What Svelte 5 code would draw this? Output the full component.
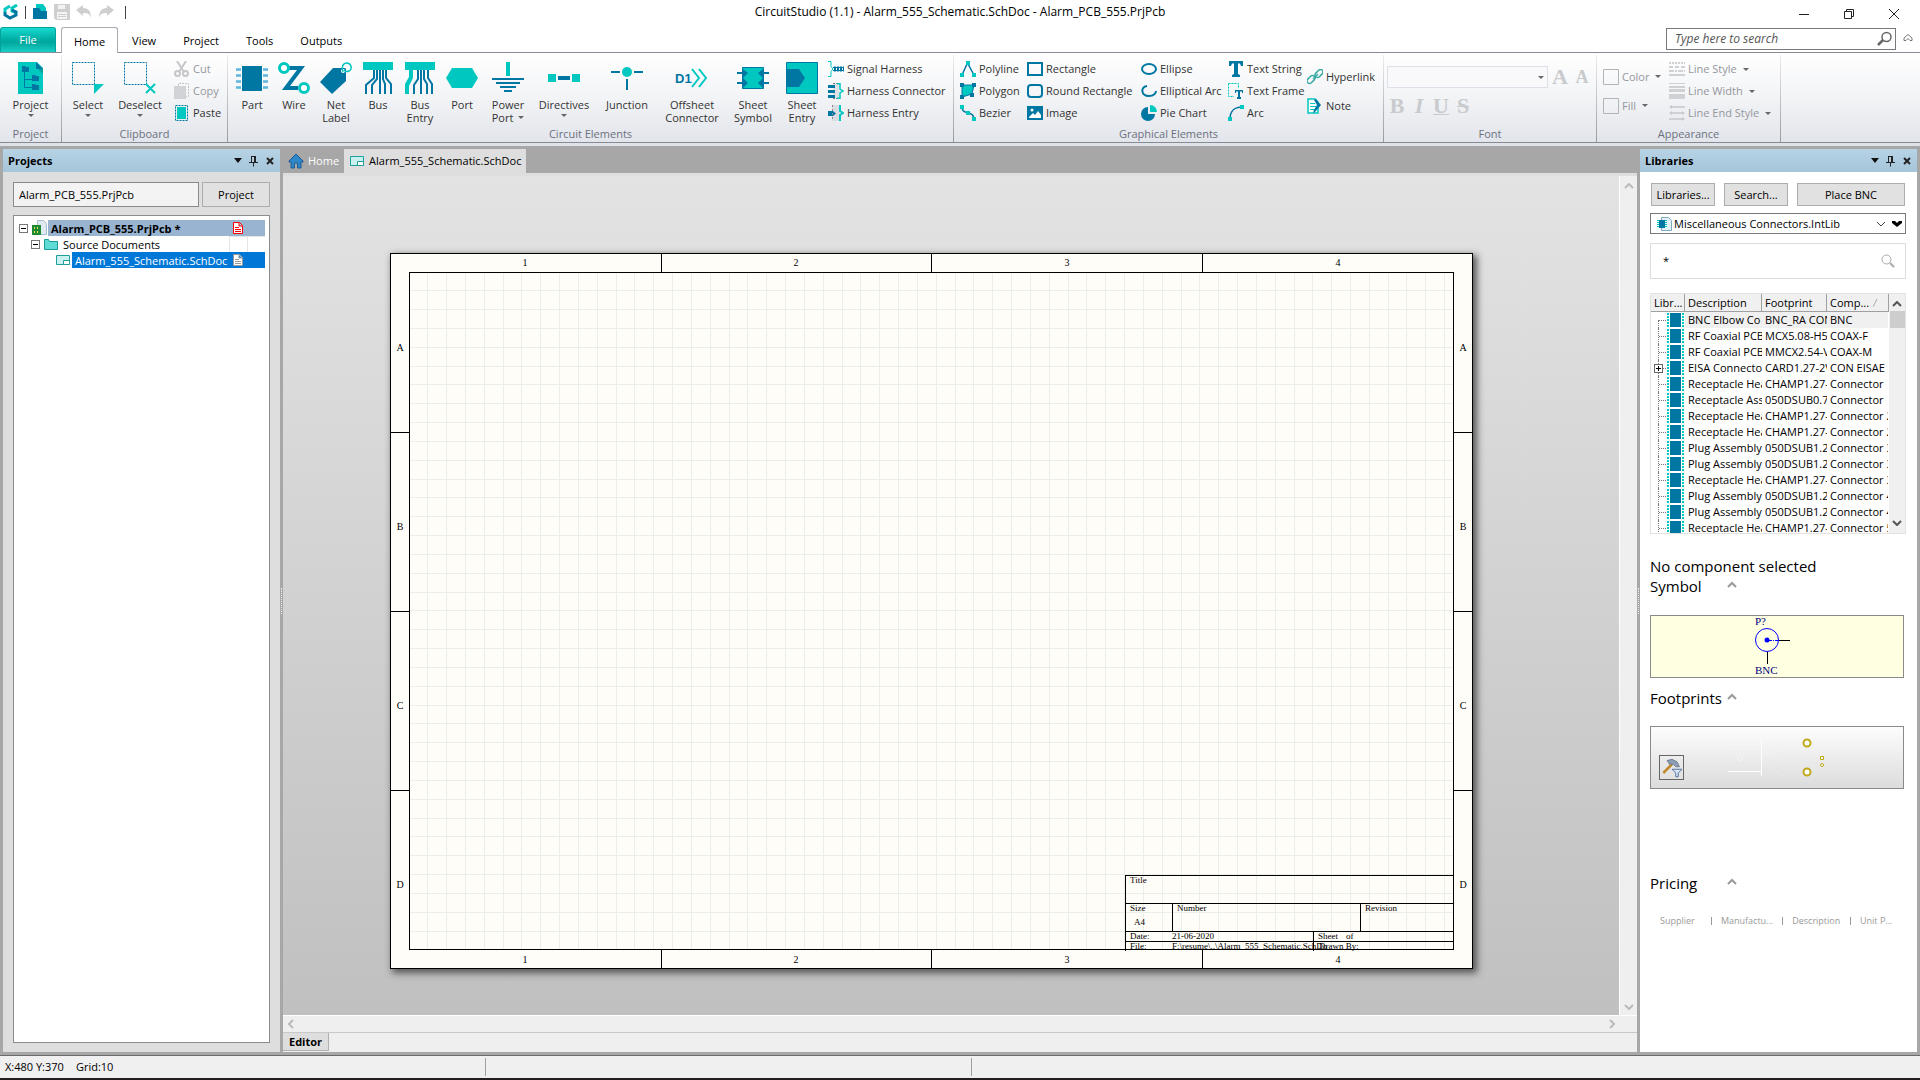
<script lang="ts">
  type BigButton = { label: string[]; icon: string; width: number; arrow?: 'below' | 'inline' };
  type SmallButton = { label: string; icon: string; disabled?: boolean; arrow?: boolean };

  const D = '#0076a3';
  const T = '#00c8c0';

  // 32x32 glyphs for the large ribbon buttons
  const big: Record<string, string> = {
    project: `<path fill="${T}" d="M3 0h19l6 6v26H3z"/><path fill="#00a39f" d="M22 6l6 6V6z"/><path fill="${D}" d="M21 0l7 7h-7zM7 4h3l1 1h3v5H7zM17 13h3l1 1h3v5h-7zM17 22h3l1 1h3v5h-7z"/><path fill="none" stroke="${D}" d="M9.500 10v15.500h7.500M9.500 17.500h7.500"/>`,
    select: `<path fill="none" stroke="${D}" stroke-dasharray="2 1" d="M.5.5h22v22H.5z"/><path fill="${T}" d="M22 22h10L22 32z"/>`,
    deselect: `<path fill="none" stroke="${D}" stroke-dasharray="2 1" d="M.5.5h22v22H.5z"/><path fill="none" stroke="${T}" stroke-width="2" d="M22 22l9 9M31 22l-9 9"/>`,
    part: `<path fill="${D}" d="M6 4h20v25H6z"/><path stroke="#5bb5dc" stroke-width="2.500" d="M0 7.500h5M0 13.500h5M0 19.500h5M0 25.500h5M27 7.500h5M27 13.500h5M27 19.500h5M27 25.500h5"/>`,
    wire: `<path fill="none" stroke="${D}" stroke-width="4" d="M11 6h12L8 26h12"/><g fill="#fff" stroke="${T}" stroke-width="3"><circle cx="6" cy="6" r="4.500"/><circle cx="26" cy="26" r="4.500"/></g>`,
    netlabel: `<path fill="${D}" d="M0 20L13 6h12l1 1v12L12 32z"/><circle cx="23" cy="9" r="2" fill="#fff"/><path fill="none" stroke="${T}" stroke-width="1.500" d="M23 10c-2-5 0-9 4-9s6 6 2 8c-2 1-4 0-5-1"/>`,
    bus: `<path fill="${T}" d="M1 0h30v8H1z"/><path fill="none" stroke="${D}" stroke-width="2" d="M12 8v8l-8 7v9M15 8v9l-5 6v9M18 8v24M21 8v9l2 5v10M24 8v8l5 6v10"/>`,
    busentry: `<path fill="${T}" d="M1 0h30v8H9v8l-4 8v8H1V22l4-7V8H1z"/><path fill="none" stroke="${D}" stroke-width="2" d="M14 8v9l-4 6v9M17 8v24M20 8v9l3 5v10M24 8v8l4 6v10"/>`,
    port: `<path fill="${T}" d="M6 6h20l6 10-6 10H6L0 16z"/>`,
    power: `<path fill="${T}" d="M14 0h4v14h-4z"/><path stroke="${D}" stroke-width="2" d="M0 17h32M4 21h24M8 25h16M12 29h8"/>`,
    directives: `<path fill="${T}" d="M0 12h8v8H0zM24 12h8v8h-8z"/><path fill="${D}" d="M10 14h12v4H10z"/>`,
    junction: `<circle cx="16" cy="10" r="5" fill="${T}"/><path stroke="${D}" stroke-width="2" d="M0 10h9M23 10h9M16 17v11"/>`,
    offsheet: `<text x="-1" y="21" font-family="Liberation Sans, sans-serif" font-weight="700" font-size="13" fill="${D}">D1</text><path fill="none" stroke="${T}" stroke-width="2" d="M16 7l7 9-7 9M23 7l7 9-7 9"/>`,
    sheetsymbol: `<path fill="${T}" stroke="${D}" d="M5.500 5.500h21v21h-21z"/><path fill="${D}" d="M6 7l5 4-5 5zM6 16l5 5-5 5zM26 7l-5 4 5 5zM26 16l-5 5 5 5z"/><path stroke="${D}" stroke-width="2" d="M0 11h8M0 21h8M24 11h8M24 21h8"/>`,
    sheetentry: `<path fill="${T}" stroke="${D}" d="M.5.5h31v31H.5z"/><path fill="${D}" d="M1 7h12l6 9-6 9H1z"/>`,
  };

  // 16x16 glyphs
  const small: Record<string, string> = {
    cut: `<g fill="none" stroke="#c6c6c8" stroke-width="2"><path d="M3 0l7 11M12 0L5 11"/><circle cx="3.500" cy="12.500" r="2.500"/><circle cx="11.500" cy="12.500" r="2.500"/></g>`,
    copy: `<path fill="#d2d3d6" d="M0 3h12v13H0z"/><path fill="none" stroke="#c6c6c8" stroke-dasharray="2 1" d="M4.500 3V.5h10v13H12"/>`,
    paste: `<path fill="none" stroke="${D}" stroke-dasharray="2 1" d="M1.500.5h12v15h-12z"/><path fill="${T}" d="M3 2h9v12H3z"/>`,
    sharness: `<path fill="none" stroke="${T}" d="M0 .5h3v5l2 2.500-2 2.500v5H0"/><path stroke="${D}" stroke-width="5" stroke-dasharray="2 1" d="M6 8h10"/><path stroke="${D}" d="M5 6.500h11M5 9.500h11"/>`,
    hconnector: `<path fill="#dfe1e6" d="M5 1h6v14H5z"/><path stroke="${D}" stroke-width="3" d="M0 3.500h7M0 8.500h7M0 13.500h7"/><path fill="none" stroke="${T}" stroke-width="1.500" d="M9 .7h3v5.500L15 8l-3 2v5.300H9"/><path stroke="#777" stroke-dasharray="2 1" d="M5 .5h4M5 15.500h4"/>`,
    hentry: `<path fill="#d9dce2" d="M4 0h8v16H4z"/><path fill="${D}" d="M0 6h5l3 2.500L5 11H0z"/><path fill="none" stroke="${T}" stroke-width="2" d="M12 0v6l3 2-3 2v6"/><path stroke="#888" stroke-dasharray="2 2" d="M4.500 0v16"/>`,
    polyline: `<path fill="none" stroke="${D}" stroke-width="1.500" d="M2 14L7 3h1l6 11"/><path fill="${T}" d="M6 0h4v4H6zM0 12h4v4H0zM12 12h4v4h-4z"/>`,
    polygon: `<path fill="${T}" stroke="${D}" d="M2 2h12L12 11 2 14z"/><path fill="${D}" d="M0 0h4v4H0zM12 0h4v4h-4zM10 10h4v4h-4zM0 12h4v4H0z"/>`,
    bezier: `<path fill="none" stroke="${D}" stroke-width="1.500" d="M2 2c0 4 2 5 5 5.500S14 9 14 14"/><path fill="${T}" d="M0 0h4v4H0zM6 6h4v4H6zM12 12h4v4h-4z"/>`,
    rect: `<path fill="none" stroke="${D}" stroke-width="2" d="M1 2h14v12H1z"/>`,
    roundrect: `<rect x="1" y="2" width="14" height="12" rx="3" fill="none" stroke="${D}" stroke-width="2"/>`,
    image: `<path fill="${D}" d="M0 1h16v14H0z"/><path fill="#fff" d="M2 12l4-4 2 2 3-4 3 4v3H2z"/><circle cx="5" cy="5" r="1.500" fill="#fff"/>`,
    ellipse: `<ellipse cx="8" cy="8" rx="7" ry="5" fill="none" stroke="${D}" stroke-width="2"/>`,
    earc: `<path fill="none" stroke="${D}" stroke-width="2" d="M6 3C-1 4 0 13 8 13c5 0 7-3 7-5"/>`,
    pie: `<path fill="${D}" d="M7 2v7h7a7 7 0 1 1-7-7z"/><path fill="${T}" d="M9 0a7 7 0 0 1 7 7H9z"/>`,
    text: `<path fill="${D}" d="M1 0h14v5h-2L12 2.500h-2V13l2 1v2H4v-2l2-1V2.500H4L3 5H1z"/>`,
    frame: `<path fill="none" stroke="${T}" stroke-dasharray="2 1" d="M.5.5h10v5M.5.5v13H6"/><path fill="${D}" d="M7 7h8v3h-1V8.500h-2V14h1v2H9v-2h1V8.500H8V10H7z"/>`,
    arc: `<path fill="none" stroke="${D}" stroke-width="1.500" d="M2 14C2 7 6 2 14 2"/><path fill="${T}" d="M12 0h4v4h-4zM0 12h4v4H0z"/>`,
    link: `<g fill="none" stroke="#3aa9a4" stroke-width="1.500"><rect x="-.5" y="8" width="9" height="5" rx="2.500" transform="rotate(-45 4 10.500)"/><rect x="7.500" y="2" width="9" height="5" rx="2.500" transform="rotate(-45 12 4.500)"/><path d="M6 10l5-5"/></g>`,
    note: `<path fill="#fff" stroke="${T}" stroke-width="1.500" d="M1 1h7l3 3v11H1z"/><path stroke="${T}" d="M3 5.500h5M3 8.500h6M3 11.500h5"/><path fill="${D}" d="M7 2l2-1 5 6-6 7-2 1 1-3 3-5z"/>`,
    swatch: `<path fill="none" stroke="#b2b4b8" d="M.5.5h15v15H.5z"/>`,
    lstyle: `<g stroke="#d0d1d5" stroke-width="2"><path stroke-dasharray="2 1" d="M0 2h16"/><path stroke-dasharray="4 2" d="M0 6h16"/><path stroke-dasharray="5 1 2 1" d="M0 10h16"/><path d="M0 14h16"/></g>`,
    lwidth: `<path fill="#d0d1d5" d="M0 0h16v1H0zM0 3h16v2H0zM0 6h16v3H0zM0 11h16v5H0z"/>`,
    lend: `<path stroke="#d0d1d5" stroke-width="2" d="M2 2h14M2 8h12M0 14h14"/><path fill="#c8c9cd" d="M3 0v4L0 2zM3 6v4L0 8zM13 6v4l3-2zM13 12v4l3-2z"/>`,
    pcb: `<path fill="#dfe9f2" stroke="#a9bfd0" d="M6.500.5h6l3 3v11h-9z"/><path fill="#1c8a35" d="M1 5h9v10H1z"/><path fill="#f4e04a" d="M3 7h1v2H3zM6 7h1v2H6zM3 11h1v2H3zM6 11h1v2H6z"/>`,
    folder: `<path fill="#5fdbd6" stroke="#169c9b" d="M1.500 3.500h4l1 2h8v8h-13z"/>`,
    sch: `<path fill="#c9f1ef" stroke="#1f9f9c" d="M1.500 3.500h13v9h-13z"/><path fill="#fff" stroke="#1f9f9c" d="M8.500 8.500h6v4h-6z"/>`,
    lib: `<path fill="#e3f1f6" stroke="#7fa9bb" d="M5.500 1.500h7l3 3v10h-10z"/><path fill="${D}" d="M3 4h6v8H3z"/><path stroke="${T}" stroke-width="2" stroke-dasharray="1 1" d="M2 4v8M10 4v8"/>`,
    chip: `<path fill="${D}" d="M3 1h11v14H3z"/><path stroke="${T}" stroke-width="2" stroke-dasharray="2 1" d="M1 1v14M16 1v14"/>`,
    home: `<path fill="#2f86c9" stroke="#1b5e95" d="M8 1l7 7v1h-2v6H9.500v-5h-3v5H3V9H1V8z"/>`,
    search: `<circle cx="9.500" cy="6" r="4.500" fill="none" stroke="#666" stroke-width="1.500"/><path stroke="#666" stroke-width="2.500" d="M6 9l-5 5"/>`,
    find: `<circle cx="6.500" cy="6.500" r="4.500" fill="none" stroke="#aaa"/><path stroke="#aaa" stroke-width="2" d="M10 10l4 4"/>`,
    pin: `<path fill="none" stroke="#222" d="M5.500 3v6M5 3.500h5M3 9.500h9M7.500 9.500v4"/><path fill="#222" d="M8 3h2v6H8z"/>`,
    menu: `<path fill="#111" d="M4 5h8l-4 5z"/>`,
    close: `<path stroke="#222" stroke-width="2" d="M5 5l6 6M11 5l-6 6"/>`,
    collapse: `<path fill="none" stroke="#999" stroke-width="2" d="M4 9l4-4 4 4"/>`,
    hammer: `<path stroke="#c08a2c" stroke-width="2" d="M1 12l7-7"/><path fill="#8d9db4" stroke="#4b5f7d" stroke-width=".5" d="M4 2l4-1 4 2 2 4-3 0-2-2-3 0z"/><path fill="#d6e4f4" stroke="#45679a" stroke-width=".7" d="M8 9h8l-3 3v3h-2v-3z"/>`,
  };

  const circuit: BigButton[] = [
    { label: ['Part'], icon: 'part', width: 42 },
    { label: ['Wire'], icon: 'wire', width: 42 },
    { label: ['Net', 'Label'], icon: 'netlabel', width: 42 },
    { label: ['Bus'], icon: 'bus', width: 42 },
    { label: ['Bus', 'Entry'], icon: 'busentry', width: 42 },
    { label: ['Port'], icon: 'port', width: 42 },
    { label: ['Power', 'Port'], icon: 'power', width: 50, arrow: 'inline' },
    { label: ['Directives'], icon: 'directives', width: 62, arrow: 'below' },
    { label: ['Junction'], icon: 'junction', width: 64 },
    { label: ['Offsheet', 'Connector'], icon: 'offsheet', width: 66 },
    { label: ['Sheet', 'Symbol'], icon: 'sheetsymbol', width: 56 },
    { label: ['Sheet', 'Entry'], icon: 'sheetentry', width: 42 },
  ];

  const clipboard: SmallButton[] = [
    { label: 'Cut', icon: 'cut', disabled: true },
    { label: 'Copy', icon: 'copy', disabled: true },
    { label: 'Paste', icon: 'paste' },
  ];
  const harness: SmallButton[] = [
    { label: 'Signal Harness', icon: 'sharness' },
    { label: 'Harness Connector', icon: 'hconnector' },
    { label: 'Harness Entry', icon: 'hentry' },
  ];
  const graphical: { width: number; items: SmallButton[] }[] = [
    { width: 67, items: [{ label: 'Polyline', icon: 'polyline' }, { label: 'Polygon', icon: 'polygon' }, { label: 'Bezier', icon: 'bezier' }] },
    { width: 114, items: [{ label: 'Rectangle', icon: 'rect' }, { label: 'Round Rectangle', icon: 'roundrect' }, { label: 'Image', icon: 'image' }] },
    { width: 87, items: [{ label: 'Ellipse', icon: 'ellipse' }, { label: 'Elliptical Arc', icon: 'earc' }, { label: 'Pie Chart', icon: 'pie' }] },
    { width: 79, items: [{ label: 'Text String', icon: 'text' }, { label: 'Text Frame', icon: 'frame' }, { label: 'Arc', icon: 'arc' }] },
    { width: 74, items: [{ label: 'Hyperlink', icon: 'link' }, { label: 'Note', icon: 'note' }] },
  ];
  const colors: SmallButton[] = [
    { label: 'Color', icon: 'swatch', disabled: true, arrow: true },
    { label: 'Fill', icon: 'swatch', disabled: true, arrow: true },
  ];
  const lines: SmallButton[] = [
    { label: 'Line Style', icon: 'lstyle', disabled: true, arrow: true },
    { label: 'Line Width', icon: 'lwidth', disabled: true, arrow: true },
    { label: 'Line End Style', icon: 'lend', disabled: true, arrow: true },
  ];

  const parts = [
    ['BNC Elbow Co', 'BNC_RA CON', 'BNC'],
    ['RF Coaxial PCB', 'MCX5.08-H5', 'COAX-F'],
    ['RF Coaxial PCB', 'MMCX2.54-V', 'COAX-M'],
    ['EISA Connecto', 'CARD1.27-2V', 'CON EISAE'],
    ['Receptacle Hea', 'CHAMP1.27-', 'Connector'],
    ['Receptacle Ass', '050DSUB0.76', 'Connector'],
    ['Receptacle Hea', 'CHAMP1.27-', 'Connector 2'],
    ['Receptacle Hea', 'CHAMP1.27-', 'Connector 2'],
    ['Plug Assembly,', '050DSUB1.27', 'Connector 3'],
    ['Plug Assembly,', '050DSUB1.27', 'Connector 3'],
    ['Receptacle Hea', 'CHAMP1.27-', 'Connector 3'],
    ['Plug Assembly,', '050DSUB1.27', 'Connector 4'],
    ['Plug Assembly,', '050DSUB1.27', 'Connector 4'],
    ['Receptacle Hea', 'CHAMP1.27-', 'Connector 5'],
  ];

  const gridX = Array.from({ length: 55 }, (_, i) => Math.floor(19 + (i + 1) * 18.83) + 0.5);
  const gridY = Array.from({ length: 35 }, (_, i) => Math.floor(19 + (i + 1) * 18.83) + 0.5);
  const zones = ['A', 'B', 'C', 'D'];

  let activeTab = 'Home';
  let activeProject = 'Alarm_PCB_555.PrjPcb';
  let filter = '*';
  let query = '';
</script>

<svelte:head><title>CircuitStudio (1.1)</title></svelte:head>

<div class="app">
  <header class="titlebar">
    <div class="quick">
      <svg width="16" height="16" viewBox="0 0 16 16"><path fill="none" stroke={T} stroke-width="3" d="M7 2L2 5v3M14 1L9 4v3l5 2" /><path fill="none" stroke={D} stroke-width="3" d="M2 8v3l5 3 6-3V8L9 6" /></svg>
      <i class="bar"></i>
      <button aria-label="Open"><svg width="16" height="16" viewBox="0 0 16 16"><path fill={T} d="M4 0h7l3 4v5H4z" /><path fill={D} d="M1 4h6l2 3h6v8H1z" /></svg></button>
      <button aria-label="Save" disabled><svg width="16" height="16" viewBox="0 0 16 16"><path fill="#cfcfcf" d="M0 0h16v16H2l-2-2z" /><path fill="#f3f3f3" d="M4 1h7v4H4zM3 8h10v7H3z" /><path stroke="#cfcfcf" d="M4 10.500h8M4 12.500h8" /></svg></button>
      <button aria-label="Undo" disabled><svg width="16" height="16" viewBox="0 0 16 16"><path fill="#cfcfcf" d="M0 6l7-5v3c6 0 8 4 8 10-1-4-3-5-8-5v3z" /></svg></button>
      <button aria-label="Redo" disabled><svg width="16" height="16" viewBox="0 0 16 16"><path fill="#cfcfcf" d="M16 6L9 1v3C3 4 1 8 1 14c1-4 3-5 8-5v3z" /></svg></button>
      <i class="bar far"></i>
    </div>
    <h1>CircuitStudio (1.1) - Alarm_555_Schematic.SchDoc - Alarm_PCB_555.PrjPcb</h1>
    <div class="window-buttons">
      <button aria-label="Minimize"><svg width="12" height="12" viewBox="0 0 12 12"><path stroke="#222" d="M1 6.500h10" /></svg></button>
      <button aria-label="Restore"><svg width="12" height="12" viewBox="0 0 12 12"><path fill="none" stroke="#222" d="M1.500 3.500h7v7h-7zM3.500 3V1.500h7v7H9" /></svg></button>
      <button aria-label="Close"><svg width="12" height="12" viewBox="0 0 12 12"><path stroke="#222" d="M1 1l10 10M11 1L1 11" /></svg></button>
    </div>
  </header>

  <nav class="tabs">
    <button class="file">File</button>
    {#each ['Home', 'View', 'Project', 'Tools', 'Outputs'] as tab}
      <button class="tab" class:active={tab === activeTab} on:click={() => (activeTab = tab)}>{tab}</button>
    {/each}
    <label class="help">
      <input type="text" placeholder="Type here to search" aria-label="Search commands" bind:value={query} />
      <svg width="16" height="16" viewBox="0 0 16 16">{@html small.search}</svg>
    </label>
    <button class="fold" aria-label="Collapse ribbon"><svg width="10" height="10" viewBox="0 0 10 10"><path fill="none" stroke="#777" d="M1 5l4-3.500L9 5v2.500H7L5 5.500l-2 2H1z" /></svg></button>
  </nav>

  {#snippet bigButton(b: BigButton)}
    <button class="big" style:width="{b.width}px">
      <svg width="32" height="32" viewBox="0 0 32 32">{@html big[b.icon]}</svg>
      {#each b.label as line, i}
        <span>{line}{#if b.arrow === 'inline' && i === b.label.length - 1}<i class="arrow"></i>{/if}</span>
      {/each}
      {#if b.arrow === 'below'}<i class="arrow"></i>{/if}
    </button>
  {/snippet}

  {#snippet smallColumn(items: SmallButton[])}
    {#each items as b}
      <button class="small" disabled={b.disabled}>
        <svg width="16" height="16" viewBox="0 0 16 16">{@html small[b.icon]}</svg>
        <span>{b.label}</span>
        {#if b.arrow}<i class="arrow"></i>{/if}
      </button>
    {/each}
  {/snippet}

  <section class="ribbon">
    <div class="group project">
      <div class="tools">{@render bigButton({ label: ['Project'], icon: 'project', width: 61, arrow: 'below' })}</div>
      <h2>Project</h2>
    </div>
    <div class="group clipboard">
      <div class="tools">
        {@render bigButton({ label: ['Select'], icon: 'select', width: 52, arrow: 'below' })}
        {@render bigButton({ label: ['Deselect'], icon: 'deselect', width: 52, arrow: 'below' })}
        <div class="column spaced">{@render smallColumn(clipboard)}</div>
      </div>
      <h2>Clipboard</h2>
    </div>
    <div class="group circuit">
      <div class="tools">
        {#each circuit as b}{@render bigButton(b)}{/each}
        <div class="column harness">{@render smallColumn(harness)}</div>
      </div>
      <h2>Circuit Elements</h2>
    </div>
    <div class="group graphical">
      <div class="tools">
        {#each graphical as col}
          <div class="column" class:two={col.items.length === 2} style:width="{col.width}px">{@render smallColumn(col.items)}</div>
        {/each}
      </div>
      <h2>Graphical Elements</h2>
    </div>
    <div class="group font">
      <div class="tools">
        <div class="font-row">
          <div class="font-select"><select aria-label="Font" disabled><option></option></select><i class="arrow"></i></div>
          <button class="glyph large" disabled>A</button>
          <button class="glyph" disabled>A</button>
        </div>
        <div class="font-row styles">
          <button class="glyph large" disabled>B</button>
          <button class="glyph large italic" disabled>I</button>
          <button class="glyph large under" disabled>U</button>
          <button class="glyph large strike" disabled>S</button>
        </div>
      </div>
      <h2>Font</h2>
    </div>
    <div class="group appearance">
      <div class="tools">
        <div class="column two colors">{@render smallColumn(colors)}</div>
        <div class="column">{@render smallColumn(lines)}</div>
      </div>
      <h2>Appearance</h2>
    </div>
  </section>

  {#snippet panelHead(title: string)}
    <div class="panel-head">
      <h2>{title}</h2>
      {#each ['menu', 'pin', 'close'] as name}
        <button aria-label={name}><svg width="16" height="16" viewBox="0 0 16 16">{@html small[name]}</svg></button>
      {/each}
    </div>
  {/snippet}

  <main>
    <aside class="projects">
      {@render panelHead('Projects')}
      <div class="project-pick">
        <input type="text" aria-label="Project" bind:value={activeProject} />
        <button class="push">Project</button>
      </div>
      <ul class="tree">
        <li class="root">
          <button class="toggle" aria-label="Collapse"></button>
          <svg width="16" height="16" viewBox="0 0 16 16">{@html small.pcb}</svg>
          <span class="name">Alarm_PCB_555.PrjPcb *</span>
          <span class="state"><svg width="10" height="12" viewBox="0 0 10 12"><path fill="#fff" stroke="red" d="M.5.500h6l3 3v8h-9zM2 5.500h4M2 7.500h6M2 9.500h6M6 1v3h3" /></svg></span><span class="cell"></span>
        </li>
        <li class="docs">
          <button class="toggle" aria-label="Collapse"></button>
          <svg width="16" height="16" viewBox="0 0 16 16">{@html small.folder}</svg>
          <span class="name">Source Documents</span>
          <span class="state"></span><span class="cell"></span>
        </li>
        <li class="sheet-item">
          <svg width="16" height="16" viewBox="0 0 16 16">{@html small.sch}</svg>
          <span class="name">Alarm_555_Schematic.SchDoc</span>
          <span class="state"><svg width="10" height="12" viewBox="0 0 10 12"><path fill="#fff" stroke="#999" d="M.5.500h6l3 3v8h-9zM2 5.500h4M2 7.500h6M2 9.500h6M6 1v3h3" /></svg></span><span class="cell"></span>
        </li>
      </ul>
    </aside>

    <div class="splitter"><i></i></div>

    <section class="document">
      <div class="doc-tabs">
        <button class="doc-tab"><svg width="16" height="16" viewBox="0 0 16 16">{@html small.home}</svg>Home</button>
        <button class="doc-tab current"><svg width="16" height="16" viewBox="0 0 16 16">{@html small.sch}</svg>Alarm_555_Schematic.SchDoc</button>
      </div>
      <div class="viewport">
        <div class="canvas">
          <svg class="sheet" width="1083" height="716" viewBox="0 0 1083 716">
            <g shape-rendering="crispEdges" fill="none">
              <path stroke="#eceeea" d={gridX.map((x) => `M${x} 20V696`).join('') + gridY.map((y) => `M20 ${y}H1063`).join('')} />
              <path stroke="#000" d="M.5.500h1082v715H.5zM19.500 19.500h1044v677h-1044zM271.500 0v19M541.500 0v19M812.500 0v19M271.500 697v19M541.500 697v19M812.500 697v19M0 179.500h19M0 358.500h19M0 537.500h19M1064 179.500h19M1064 358.500h19M1064 537.500h19" />
              <path stroke="#000" d="M735.500 698V622.500h328M735 650.500h328M735 678.500h328M735 688.500h328M782.500 650v28M970.500 650v28M923.500 678v20" />
            </g>
            <g class="zone">
              {#each zones as z, i}
                <text x={135 + i * 271} y="13">{i + 1}</text>
                <text x={135 + i * 271} y="710">{i + 1}</text>
                <text x="10" y={98 + i * 179}>{z}</text>
                <text x="1073" y={98 + i * 179}>{z}</text>
              {/each}
            </g>
            <g class="block">
              <text x="740" y="630">Title</text>
              <text x="740" y="658">Size</text>
              <text x="744" y="672">A4</text>
              <text x="787" y="658">Number</text>
              <text x="975" y="658">Revision</text>
              <text x="740" y="686">Date:</text>
              <text x="782" y="686">21-06-2020</text>
              <text x="928" y="686">Sheet</text>
              <text x="956" y="686">of</text>
              <text x="740" y="696">File:</text>
              <text x="782" y="696">F:\resume\..\Alarm_555_Schematic.SchDo</text>
              <text x="929" y="696">Drawn By:</text>
            </g>
          </svg>
        </div>
        <div class="vscroll">
          <svg width="10" height="6" viewBox="0 0 10 6"><path fill="none" stroke="#bbb" stroke-width="2" d="M1 5l4-4 4 4" /></svg>
          <svg width="10" height="6" viewBox="0 0 10 6"><path fill="none" stroke="#bbb" stroke-width="2" d="M1 1l4 4 4-4" /></svg>
        </div>
      </div>
      <div class="hscroll">
        <svg width="6" height="10" viewBox="0 0 6 10"><path fill="none" stroke="#bbb" stroke-width="2" d="M5 1L1 5l4 4" /></svg>
        <svg width="6" height="10" viewBox="0 0 6 10"><path fill="none" stroke="#bbb" stroke-width="2" d="M1 1l4 4-4 4" /></svg>
      </div>
      <div class="editor-tabs"><button>Editor</button></div>
    </section>

    <div class="splitter"><i></i></div>

    <aside class="libraries">
      {@render panelHead('Libraries')}
      <div class="lib-body">
        <div class="lib-buttons">
          <button class="push">Libraries...</button>
          <button class="push">Search...</button>
          <button class="push wide">Place BNC</button>
        </div>
        <div class="lib-select">
          <svg width="16" height="16" viewBox="0 0 16 16">{@html small.lib}</svg>
          <select aria-label="Library"><option>Miscellaneous Connectors.IntLib</option></select>
          <svg width="10" height="6" viewBox="0 0 10 6"><path fill="none" stroke="#444" d="M1 1l4 4 4-4" /></svg>
          <svg width="10" height="6" viewBox="0 0 10 6"><path fill="#000" d="M0 0h3l2 2 2-2h3v2L5 6 0 2z" /></svg>
        </div>
        <label class="lib-filter">
          <input type="text" aria-label="Filter" bind:value={filter} />
          <svg width="16" height="16" viewBox="0 0 16 16">{@html small.find}</svg>
        </label>
        <div class="lib-list">
          <table>
            <thead>
              <tr><th>Libr...</th><th>Description</th><th>Footprint</th><th>Comp...<svg width="8" height="8" viewBox="0 0 8 8"><path fill="none" stroke="#aaa" d="M0 8l4-8" /></svg></th></tr>
            </thead>
            <tbody>
              {#each parts as row, i}
                <tr class:hot={i === 0}>
                  <td class="lead" class:first={i === 0}>
                    <div class="branch">{#if i === 3}<b></b>{/if}<svg width="17" height="16" viewBox="0 0 17 16">{@html small.chip}</svg></div>
                  </td>
                  {#each row as text}<td>{text}</td>{/each}
                </tr>
              {/each}
            </tbody>
          </table>
          <div class="list-scroll">
            <svg width="10" height="6" viewBox="0 0 10 6"><path fill="none" stroke="#555" stroke-width="2" d="M1 5l4-4 4 4" /></svg>
            <i></i>
            <svg width="10" height="6" viewBox="0 0 10 6"><path fill="none" stroke="#555" stroke-width="2" d="M1 1l4 4 4-4" /></svg>
          </div>
        </div>

        <p class="status-line">No component selected</p>
        <h3>Symbol <button aria-label="Collapse"><svg width="16" height="16" viewBox="0 0 16 16">{@html small.collapse}</svg></button></h3>
        <div class="preview symbol">
          <svg width="50" height="60" viewBox="0 0 50 60">
            <circle cx="17" cy="24" r="11.500" fill="none" stroke="#00f" />
            <circle cx="17" cy="24" r="2.500" fill="#00f" />
            <path stroke="#00f" stroke-dasharray="3 1 1 1" d="M19 24.500h9" />
            <path stroke="#000" d="M29 24.500h11M17.500 36v12" />
            <text x="5" y="9">P?</text>
            <text x="5" y="58">BNC</text>
          </svg>
        </div>
        <h3>Footprints <button aria-label="Collapse"><svg width="16" height="16" viewBox="0 0 16 16">{@html small.collapse}</svg></button></h3>
        <div class="preview footprint">
          <button aria-label="Footprint tools"><svg width="20" height="20" viewBox="0 0 16 16">{@html small.hammer}</svg></button>
          <svg width="100" height="44" viewBox="0 0 100 44">
            <path fill="none" stroke="#fff" d="M0 35.500h34M33.500 4v36" />
            <path stroke="#f6f6f6" d="M0 8.500h34" />
            <circle cx="12" cy="22" r="2.500" fill="none" stroke="#f4f4f4" />
            <path stroke="#fafafa" stroke-dasharray="1 3" d="M36 5l20 12M36 14l20 14M36 26l20 14" />
            <g fill="#fff" stroke="#c0a91c" stroke-width="2"><circle cx="79" cy="7" r="3.500" /><circle cx="79" cy="36" r="3.500" /></g>
            <path fill="#fff" stroke="#c0a91c" d="M92.500 20.500h3v3h-3z" />
            <circle cx="94" cy="29" r="1.500" fill="#fff" stroke="#c0a91c" />
          </svg>
        </div>
        <h3 class="pricing">Pricing <button aria-label="Collapse"><svg width="16" height="16" viewBox="0 0 16 16">{@html small.collapse}</svg></button></h3>
        <table class="prices">
          <thead><tr><th>Supplier</th><th>Manufactu...</th><th>Description</th><th>Unit P...</th></tr></thead>
        </table>
      </div>
    </aside>
  </main>

  <footer>
    <span class="slot"><span>X:480 Y:370</span><span>Grid:10</span></span>
    <span class="slot"></span>
    <span class="slot rest"></span>
  </footer>
</div>

<style>
  :global(body) {
    background: #231f20;
  }
  .app {
    display: flex;
    flex-direction: column;
    height: 100vh;
    box-sizing: border-box;
    border-bottom: 2px solid #231f20;
    background: #fff;
    color: #000;
    font: 11px/16px 'Open Sans', 'Noto Sans', sans-serif;
    overflow: hidden;
  }
  .app :global(*) {
    box-sizing: border-box;
  }
  h1, h2, h3, p, ul {
    margin: 0;
    padding: 0;
    font-size: 11px;
    font-weight: 400;
  }
  button, input, select {
    margin: 0;
    padding: 0;
    border: 0;
    background: none;
    color: inherit;
    font: inherit;
    outline: none;
  }
  svg {
    display: block;
    flex: none;
  }

  /* title bar */
  .titlebar {
    display: grid;
    grid-template-columns: 1fr auto 1fr;
    align-items: center;
    height: 24px;
  }
  .titlebar h1 {
    font-size: 12px;
  }
  .quick {
    display: flex;
    align-items: center;
    gap: 6px;
    padding-left: 3px;
  }
  .bar {
    width: 1px;
    height: 13px;
    background: #444;
  }
  .far {
    margin-left: 5px;
  }
  .window-buttons {
    display: flex;
    justify-content: flex-end;
    padding: 4px 4px 0 0;
  }
  .window-buttons button {
    width: 45px;
    padding-left: 17px;
  }

  /* tab strip */
  .tabs {
    display: flex;
    align-items: flex-end;
    height: 29px;
    border-bottom: 1px solid #868b94;
  }
  .file {
    width: 56px;
    height: 25px;
    margin-right: 5px;
    border: 1px solid #00a39a;
    border-bottom: 0;
    border-radius: 3px 3px 0 0;
    background: linear-gradient(#19d9cf, #00b0a6 45%, #00a79d 60%, #19cfc5);
    color: #fff;
  }
  .tab {
    height: 25px;
    margin-right: 1px;
    padding: 2px 12px 0;
    border: 1px solid transparent;
    border-bottom: 0;
  }
  .tab.active {
    height: 26px;
    margin-bottom: -1px;
    border-color: #a7abb2;
    border-radius: 3px 3px 0 0;
    background: #fff;
  }
  .help {
    display: flex;
    align-items: center;
    width: 230px;
    height: 22px;
    margin: 0 7px 2px auto;
    padding: 0 2px 0 8px;
    border: 1px solid #77797e;
  }
  .help input {
    flex: 1;
    min-width: 0;
    font-size: 12px;
    font-style: italic;
  }
  .help input::placeholder {
    color: #555;
  }
  .fold {
    margin: 0 7px 9px 0;
  }

  /* ribbon */
  .ribbon {
    display: flex;
    height: 90px;
    padding-top: 2px;
    border-bottom: 1px solid #868b94;
    background: linear-gradient(#fff, #f4f5f7 45%, #e2e5eb);
    color: #333;
  }
  .group {
    display: flex;
    flex-direction: column;
    border-right: 1px solid #a9acb2;
    border-image: linear-gradient(#eee, #999) 1;
  }
  .group h2 {
    height: 17px;
    color: #6c7180;
    line-height: 18px;
    text-align: center;
  }
  .group .tools {
    display: flex;
    height: 70px;
    padding-top: 3px;
  }
  .project { width: 62px; }
  .clipboard { width: 166px; }
  .circuit { width: 726px; }
  .graphical { width: 430px; }
  .font { width: 213px; }
  .appearance { width: 184px; }
  .circuit .tools { padding-left: 3px; }
  .graphical .tools { padding-left: 6px; }
  .appearance .tools { padding-left: 6px; }
  .big {
    display: flex;
    flex-direction: column;
    align-items: center;
    flex: none;
    padding-top: 4px;
    line-height: 13px;
  }
  .big svg {
    margin-bottom: 4px;
    overflow: visible;
  }
  .big > .arrow {
    margin-top: 3px;
  }
  .arrow {
    display: inline-block;
    border: 3px solid transparent;
    border-top-color: #666;
    border-bottom: 0;
  }
  .big span .arrow {
    margin: 0 0 3px 5px;
  }
  .column {
    display: flex;
    flex-direction: column;
    flex: none;
  }
  .spaced { padding-left: 8px; }
  .harness { padding-left: 5px; }
  .colors { width: 66px; }
  .small {
    display: flex;
    align-items: center;
    gap: 3px;
    height: 22px;
    white-space: nowrap;
  }
  .small .arrow {
    margin-left: 3px;
  }
  .two {
    padding-top: 4px;
  }
  .two .small {
    height: 29px;
  }
  .small:disabled {
    color: #94979d;
  }
  .font .tools {
    flex-direction: column;
    padding-left: 3px;
  }
  .font-row {
    display: flex;
    align-items: center;
    gap: 2px;
    height: 34px;
    margin-top: 2px;
  }
  .styles {
    height: 24px;
    margin: 0;
  }
  .font-select {
    display: flex;
    align-items: center;
    width: 161px;
    height: 22px;
    padding-right: 3px;
    border: 1px solid #dde0e8;
    background: #f9f9fb;
  }
  .font-select select {
    flex: 1;
    appearance: none;
  }
  .glyph {
    width: 20px;
    color: #c9cacd;
    font: 700 18px/22px 'Liberation Serif', serif;
  }
  .large { font-size: 22px; }
  .italic { font-style: italic; }
  .under { text-decoration: underline 1px; }
  .strike { text-decoration: line-through 1px; }

  /* workspace */
  main {
    flex: 1;
    display: flex;
    min-height: 0;
    padding: 3px;
    border-top: 3px solid #dfe2e7;
    border-bottom: 1px solid #6b6b6b;
    background: #a7a7a7;
  }
  aside {
    display: flex;
    flex-direction: column;
    flex: none;
    width: 277px;
  }
  .projects { background: #dedede; }
  .libraries { background: #fff; }
  .panel-head {
    display: flex;
    align-items: center;
    flex: none;
    height: 23px;
    padding: 0 2px 0 5px;
    background: linear-gradient(#b7d3e5, #a5c5da);
  }
  .panel-head h2 {
    flex: 1;
    font-weight: 700;
  }
  .splitter {
    display: flex;
    align-items: center;
    flex: none;
    width: 3px;
  }
  .splitter i {
    height: 26px;
    margin-left: 1px;
    border-left: 1px dotted #eee;
  }
  .push {
    border: 1px solid #adadad;
    background: #e1e1e1;
  }
  .project-pick {
    display: flex;
    gap: 3px;
    padding: 10px 10px 8px;
  }
  .project-pick input {
    flex: 1;
    min-width: 0;
    height: 25px;
    padding: 0 5px;
    border: 1px solid #8a8a8a;
    background: #f3f3f3;
  }
  .project-pick .push {
    width: 68px;
  }
  .tree {
    flex: 1;
    margin: 0 10px 9px;
    padding: 4px;
    border: 1px solid #8c8c8c;
    background: #fff;
    list-style: none;
  }
  .tree li {
    display: flex;
    align-items: center;
    height: 16px;
  }
  .tree .name {
    flex: 1;
    align-self: stretch;
    margin-left: 1px;
    padding-left: 3px;
    white-space: nowrap;
    line-height: 17px;
  }
  .tree .toggle {
    width: 9px;
    height: 9px;
    margin: 0 3px 0 1px;
    border: 1px solid #777;
    background: linear-gradient(#000, #000) center / 5px 1px no-repeat;
  }
  .docs { padding-left: 12px; }
  .sheet-item { padding-left: 37px; }
  .state, .cell {
    align-self: stretch;
    width: 18px;
    padding: 2px 0 0 4px;
  }
  .root .name {
    font-weight: 700;
  }
  .root .name, .root .state, .root .cell {
    background: #99b4d1;
  }
  .docs .state, .docs .cell {
    border: 1px solid #e5e5e5;
    border-width: 1px 0 0 1px;
  }
  .sheet-item .name, .sheet-item .state, .sheet-item .cell {
    background: #0078d7;
    color: #fff;
  }

  .document {
    flex: 1;
    display: flex;
    flex-direction: column;
    min-width: 0;
    background: #efefef;
  }
  .doc-tabs {
    display: flex;
    height: 24px;
    background: #a7a7a7;
  }
  .doc-tab {
    display: flex;
    align-items: center;
    gap: 4px;
    padding: 0 5px;
    color: #fff;
  }
  .doc-tab.current {
    background: #dedede;
    color: #000;
  }
  .viewport {
    flex: 1;
    display: flex;
    min-height: 0;
    border-top: 3px solid #dedede;
    border-bottom: 1px solid #fff;
  }
  .canvas {
    flex: 1;
    display: flex;
    align-items: center;
    justify-content: center;
    min-width: 0;
    padding: 30px 40px 0 0;
    border-right: 1px solid #fff;
    background: linear-gradient(#e3e3e3, #c0c0c0);
    overflow: hidden;
  }
  .sheet {
    background: #fffdf8;
    box-shadow: 3px 3px 7px 1px #555;
  }
  .zone, .block {
    font-family: 'Liberation Serif', serif;
  }
  .zone {
    font-size: 10px;
    text-anchor: middle;
  }
  .block {
    font-size: 9px;
  }
  .vscroll {
    display: flex;
    flex-direction: column;
    justify-content: space-between;
    align-items: center;
    width: 17px;
    padding: 7px 0 5px;
  }
  .hscroll {
    display: flex;
    justify-content: space-between;
    align-items: center;
    height: 16px;
    padding: 0 22px 0 5px;
  }
  .editor-tabs {
    height: 20px;
    border-top: 1px solid #c8c8c8;
  }
  .editor-tabs button {
    height: 18px;
    padding: 0 6px;
    border: 1px solid #b0b0b0;
    border-width: 0 1px 1px 0;
    background: #dedede;
    font-weight: 700;
  }

  .lib-body {
    padding: 11px 11px 0 10px;
  }
  .lib-buttons {
    display: flex;
    gap: 9px;
    padding: 0 1px;
  }
  .lib-buttons .push {
    width: 64px;
    height: 23px;
  }
  .lib-buttons .wide {
    flex: 1;
  }
  .lib-select {
    display: flex;
    align-items: center;
    gap: 6px;
    height: 21px;
    margin-top: 7px;
    padding: 0 3px 0 5px;
    border: 1px solid #77797e;
  }
  .lib-select select {
    flex: 1;
    min-width: 0;
    margin-left: -4px;
    appearance: none;
  }
  .lib-filter {
    display: flex;
    align-items: center;
    height: 36px;
    margin-top: 9px;
    padding: 0 9px 0 12px;
    border: 1px solid #dcdcdc;
  }
  .lib-filter input {
    flex: 1;
    min-width: 0;
  }
  .lib-list {
    display: flex;
    height: 241px;
    margin-top: 14px;
    border: 1px solid #e2e2e2;
    overflow: hidden;
  }
  .lib-list table {
    flex: none;
    display: block;
    width: 238px;
    border-collapse: collapse;
    overflow: hidden;
  }
  .lib-list thead, .lib-list tbody {
    display: block;
  }
  .lib-list tr {
    display: grid;
    grid-template-columns: 34px 77px 65px 62px;
    height: 16px;
  }
  .lib-list th {
    padding: 1px 3px 0;
    border-right: 1px solid #a0a0a0;
    font-weight: 400;
    text-align: left;
    white-space: nowrap;
  }
  .lib-list th svg {
    display: inline-block;
    margin-left: 4px;
  }
  .lib-list thead tr {
    height: 18px;
    border-bottom: 1px solid #a0a0a0;
    background: #f0f0f0;
  }
  .lib-list td {
    padding: 0 0 0 3px;
    overflow: hidden;
    white-space: nowrap;
  }
  .lib-list td:last-child {
    margin-right: 1px;
  }
  .hot td:not(.lead) {
    background: #f0f0f0;
  }
  .lib-list .lead {
    padding: 0;
  }
  .branch {
    display: flex;
    align-items: center;
    justify-content: flex-end;
    height: 16px;
    margin-left: 7px;
    border-left: 1px dotted #777;
    background: repeating-linear-gradient(90deg, #777 0 1px, transparent 1px 2px) 0 8px / 8px 1px no-repeat;
  }
  .first .branch {
    height: 8px;
    margin-top: 8px;
    align-items: flex-end;
    background-position: 0 0;
  }
  .first .branch svg {
    margin-top: -8px;
  }
  .branch b {
    width: 9px;
    height: 9px;
    margin: 0 auto 0 -5px;
    border: 1px solid #666;
    background:
      linear-gradient(#000, #000) center / 5px 1px no-repeat,
      linear-gradient(#000, #000) center / 1px 5px no-repeat,
      #fff;
  }
  .branch svg {
    margin-right: 1px;
  }
  .list-scroll {
    display: flex;
    flex-direction: column;
    align-items: center;
    flex: 1;
    padding: 7px 0;
    background: #f0f0f0;
  }
  .list-scroll i {
    width: 15px;
    height: 17px;
    margin: 4px 0 auto;
    background: #cdcdcd;
  }
  .status-line, .lib-body h3 {
    height: 20px;
    font-size: 15px;
    line-height: 20px;
  }
  .status-line {
    margin-top: 22px;
  }
  .lib-body h3 {
    display: grid;
    grid-template-columns: 74px 16px;
  }
  .preview {
    display: flex;
    height: 63px;
    margin: 19px 2px 10px 0;
    border: 1px solid #8a8a8a;
  }
  .symbol {
    padding-left: 99px;
    background: #ffffe1;
  }
  .symbol text {
    fill: #000080;
    font: 11px 'Liberation Serif', serif;
  }
  .footprint {
    align-items: flex-end;
    margin-top: 18px;
    padding: 0 0 8px 8px;
    background: linear-gradient(#fdfdfd, #dcdcdc);
  }
  .footprint button {
    width: 25px;
    height: 25px;
    padding-left: 2px;
    border: 1px solid #666;
  }
  .footprint > svg {
    margin-left: 44px;
  }
  .pricing {
    margin-top: 84px;
  }
  .prices {
    margin: 24px 0 0 10px;
    border-collapse: collapse;
    color: #999;
    font-size: 9px;
    line-height: 8px;
  }
  .prices th {
    width: 70px;
    padding: 0 9px;
    border-left: 1px solid #999;
    font-weight: 400;
    text-align: left;
    white-space: nowrap;
  }
  .prices th:first-child {
    width: 52px;
    padding: 0 16px 0 0;
    border: 0;
  }

  footer {
    display: flex;
    height: 22px;
    padding: 2px 0;
    background: #f0f0f0;
  }
  .slot {
    display: flex;
    align-items: center;
    gap: 12px;
    width: 486px;
    padding-left: 5px;
    border-right: 1px solid #a0a0a0;
  }
  .rest {
    flex: 1;
    border: 0;
  }
</style>
